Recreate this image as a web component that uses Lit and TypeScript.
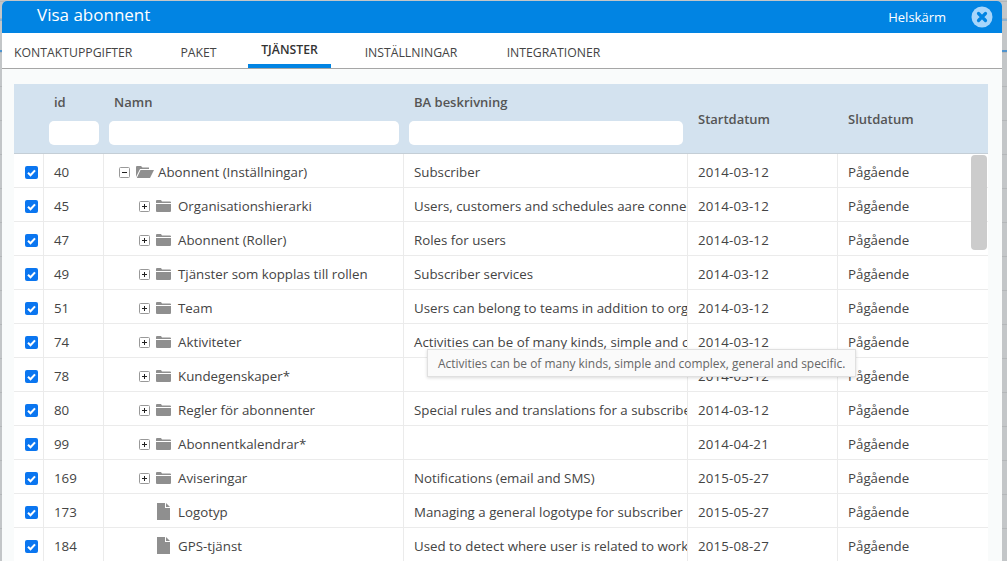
import { LitElement, css, html, svg } from "lit";
import { customElement } from "lit/decorators.js";

type Kind = "open" | "closed" | "file";
type Row = { id: number; name: string; desc: string; start: string; kind: Kind };

const rows: Row[] = [
  { id: 40, name: "Abonnent (Inställningar)", desc: "Subscriber", start: "2014-03-12", kind: "open" },
  { id: 45, name: "Organisationshierarki", desc: "Users, customers and schedules aare connected to the hierarchy", start: "2014-03-12", kind: "closed" },
  { id: 47, name: "Abonnent (Roller)", desc: "Roles for users", start: "2014-03-12", kind: "closed" },
  { id: 49, name: "Tjänster som kopplas till rollen", desc: "Subscriber services", start: "2014-03-12", kind: "closed" },
  { id: 51, name: "Team", desc: "Users can belong to teams in addition to organisation", start: "2014-03-12", kind: "closed" },
  { id: 74, name: "Aktiviteter", desc: "Activities can be of many kinds, simple and complex, general and specific.", start: "2014-03-12", kind: "closed" },
  { id: 78, name: "Kundegenskaper*", desc: "", start: "2014-03-12", kind: "closed" },
  { id: 80, name: "Regler för abonnenter", desc: "Special rules and translations for a subscriber", start: "2014-03-12", kind: "closed" },
  { id: 99, name: "Abonnentkalendrar*", desc: "", start: "2014-04-21", kind: "closed" },
  { id: 169, name: "Aviseringar", desc: "Notifications (email and SMS)", start: "2015-05-27", kind: "closed" },
  { id: 173, name: "Logotyp", desc: "Managing a general logotype for subscriber", start: "2015-05-27", kind: "file" },
  { id: 184, name: "GPS-tjänst", desc: "Used to detect where user is related to work", start: "2015-08-27", kind: "file" },
];

const tabs = [
  { label: "KONTAKTUPPGIFTER", cls: "first" },
  { label: "PAKET", cls: "paket" },
  { label: "TJÄNSTER", cls: "active" },
  { label: "INSTÄLLNINGAR", cls: "settings" },
  { label: "INTEGRATIONER", cls: "integrations" },
];

@customElement("app-root")
export class AppRoot extends LitElement {
  static styles = css`
    :host {
      display: block;
      height: 561px;
      overflow: hidden;
      background-color: #c3c6c8;
      background-image: linear-gradient(#4f94cf, #4f94cf), linear-gradient(#8fb2cf, #8fb2cf),
        repeating-linear-gradient(to bottom, #b4b7b9 0, #b4b7b9 1px, transparent 1px, transparent 34px);
      background-size: 100% 2px, 100% 2px, 100% 100%;
      background-position: 0 50px, 0 19px, 0 18px;
      background-repeat: no-repeat, no-repeat, repeat;
      font-family: "Open Sans", sans-serif;
      font-size: 13.3px;
      color: #444;
    }
    .dialog {
      position: relative;
      height: 560px;
      margin: 1px 5px 0 2px;
      background: #f9fbfb;
      border-radius: 5px 5px 0 0;
      overflow: hidden;
    }
    .title {
      height: 32px;
      display: flex;
      align-items: center;
      background: #0184e3;
      color: #fff;
      padding: 0 9px 0 35px;
    }
    .title h1 {
      flex: 1;
      margin: 0 0 5px;
      font-size: 17px;
      font-weight: 400;
    }
    .full {
      font-size: 13px;
      margin-right: 25px;
    }
    .tabs {
      height: 35px;
      display: flex;
      background: #fff;
      border-bottom: 1px solid #a6a6a6;
      font-size: 12.25px;
      color: #444;
    }
    .tab {
      box-sizing: border-box;
      height: 35px;
      padding-top: 11px;
      text-align: center;
      white-space: nowrap;
    }
    .tab.first {
      width: 147px;
      padding-left: 12px;
      text-align: left;
    }
    .tab.paket {
      width: 99px;
    }
    .tab.active {
      width: 83px;
      color: #333;
      font-weight: 600;
      padding-top: 8px;
      border-bottom: 4px solid #0184e3;
    }
    .tab.settings {
      width: 160px;
    }
    .tab.integrations {
      width: 125px;
    }
    .content {
      padding: 15px 14px 0 12px;
    }
    .head {
      display: grid;
      grid-template-columns: 29px 60px 300px 284px 150px 1fr;
      height: 69px;
      background: #d3e2ef;
      border-bottom: 1px solid #c4ced6;
      font-weight: 600;
      color: #555;
      font-size: 13px;
    }
    .head .col {
      display: flex;
      flex-direction: column;
      padding: 9px 4px 0 6px;
      gap: 10px;
    }
    .head .plain {
      padding: 26px 11px 0;
    }
    .head .label {
      padding-left: 5px;
      line-height: 18px;
    }
    .head input {
      box-sizing: border-box;
      height: 24px;
      width: 100%;
      border: 0;
      border-radius: 5px;
      background: #fff;
    }
    .row {
      display: grid;
      grid-template-columns: 29px 60px 300px 284px 150px 1fr;
      height: 34px;
      box-sizing: border-box;
      background: #fff;
      border-bottom: 1px solid #ebebeb;
      align-items: stretch;
    }
    .cell {
      display: flex;
      align-items: center;
      padding: 3px 0 0 10px;
      border-left: 1px solid #ebebeb;
      white-space: nowrap;
      overflow: hidden;
      min-width: 0;
    }
    .cell:first-child {
      border-left: 0;
      padding: 3px 0 0 11px;
    }
    .date {
      letter-spacing: 0.15px;
    }
    .tree.level1 {
      padding-left: 35px;
    }
    .tree.level0 {
      padding-left: 15px;
    }
    .check {
      width: 13px;
      height: 13px;
      border-radius: 2px;
      background: #0b76f0;
      display: block;
    }
    .toggle {
      flex: none;
      display: block;
      margin-right: 6px;
    }
    .icon {
      flex: none;
      display: block;
      margin-top: -2px;
      margin-right: 7px;
    }
    .icon.open {
      margin-right: 4px;
    }
    .icon.file {
      margin-left: 18px;
      margin-right: 8px;
    }
    .tip {
      position: absolute;
      left: 425px;
      top: 348px;
      padding: 5px 10px 4px;
      height: 17px;
      line-height: 17px;
      font-size: 11.95px;
      color: #666;
      background: #fafafa;
      border: 1px solid #e0e0e0;
      box-shadow: 0 1px 3px rgba(0, 0, 0, 0.15);
      white-space: nowrap;
    }
    .thumb {
      position: absolute;
      left: 969px;
      top: 154px;
      width: 16px;
      height: 95px;
      background: #ccc;
      border-radius: 4px;
    }
  `;

  private checkbox() {
    return svg`<svg class="check" viewBox="0 0 13 13"><path d="M3 6.800l2.500 2.400L10 4.400" fill="none" stroke="#fff" stroke-width="2.100"/></svg>`;
  }

  private toggle(open: boolean) {
    return svg`<svg class="toggle" width="11" height="11" viewBox="0 0 11 11">
      <rect x=".5" y=".5" width="10" height="10" rx="1" fill="#fff" stroke="#999"/>
      <path d=${open ? "M3 5.500h5" : "M3 5.500h5M5.500 3v5"} stroke="#222" fill="none"/>
    </svg>`;
  }

  private icon(kind: Kind) {
    if (kind === "open") {
      return svg`<svg class="icon open" width="18" height="13" viewBox="0 0 18 13">
        <path d="M0 12V2q0-1 1-1h4l1.500 1.500H13V4H4L0 12zM4.500 5H18l-4 8H.8z" fill="#8f8f8f"/>
      </svg>`;
    }
    if (kind === "closed") {
      return svg`<svg class="icon" width="15" height="13" viewBox="0 0 15 13">
        <path d="M0 2q0-1 1-1h4l1 1.500h8q1 0 1 1V4H0zM0 5h15v7q0 1-1 1H1q-1 0-1-1z" fill="#8f8f8f"/>
      </svg>`;
    }
    return svg`<svg class="icon file" width="13" height="17" viewBox="0 0 13 17">
      <path d="M0 0h8v5h5v12H0zM9 0l4 4H9z" fill="#8f8f8f"/>
    </svg>`;
  }

  private treeCell(r: Row) {
    const open = r.kind === "open";
    return html`<div class="cell tree ${open ? "level0" : "level1"}">
      ${r.kind === "file" ? "" : this.toggle(open)}
      ${this.icon(r.kind)}
      <span>${r.name}</span>
    </div>`;
  }

  render() {
    return html`
      <div class="dialog">
        <div class="title">
          <h1>Visa abonnent</h1>
          <span class="full">Helskärm</span>
          <svg width="22" height="22" viewBox="0 0 22 22">
            <circle cx="11" cy="11" r="10.500" fill="#a8d6fb"/>
            <path d="M7.500 7.500l7 7M14.500 7.500l-7 7" stroke="#0184e3" stroke-width="3.200" stroke-linecap="round"/>
          </svg>
        </div>
        <div class="tabs">
          ${tabs.map((t) => html`<div class="tab ${t.cls}">${t.label}</div>`)}
        </div>
        <div class="content">
          <div class="head">
            <div></div>
            <div class="col"><span class="label">id</span><input /></div>
            <div class="col"><span class="label">Namn</span><input /></div>
            <div class="col"><span class="label">BA beskrivning</span><input /></div>
            <div class="plain">Startdatum</div>
            <div class="plain">Slutdatum</div>
          </div>
          ${rows.map(
            (r) => html`<div class="row">
              <div class="cell">${this.checkbox()}</div>
              <div class="cell">${r.id}</div>
              ${this.treeCell(r)}
              <div class="cell">${r.desc}</div>
              <div class="cell date">${r.start}</div>
              <div class="cell">Pågående</div>
            </div>`
          )}
        </div>
        <div class="thumb"></div>
        <div class="tip">Activities can be of many kinds, simple and complex, general and specific.</div>
      </div>
    `;
  }
}
